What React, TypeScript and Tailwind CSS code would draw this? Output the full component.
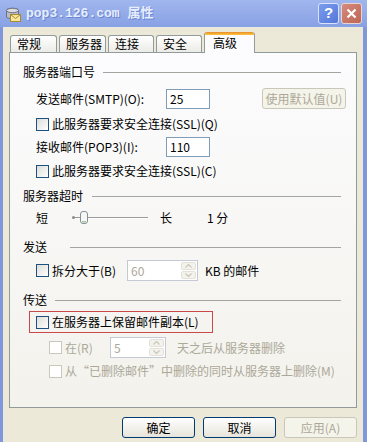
import React from 'react';

const Check = ({ disabled }: { disabled?: boolean }) => (
    <span
        className={
            disabled
                ? 'block w-[13px] h-[13px] shrink-0 border border-[#CAC8BB] bg-white'
                : 'block w-[13px] h-[13px] shrink-0 border border-[#1C5180] bg-linear-to-br from-[#DCDCD7] to-white'
        }
    />
);

const Group = ({ label, w }: { label: string; w: string }) => (
    <div className="flex items-center h-[16px] pl-[13px] pr-[15px]">
        <span className={`${w} shrink-0 leading-[14px]`}>{label}</span>
        <div className="flex-1 h-px bg-[#A5A5A0]" />
    </div>
);

const Spin = ({ value, w }: { value: string; w: string }) => (
    <div className={`${w} h-[21px] border border-[#C3CAD6] bg-white flex items-center justify-between pl-[3px] pr-px`}>
        <span className="text-[#ACA899]">{value}</span>
        <div className="w-[15px] h-[17px] flex flex-col gap-px">
            <div className="flex-1 rounded-[2px] border border-[#E4E2D8] bg-[#F3F2EC] flex items-center justify-center">
                <svg width="7" height="4" viewBox="0 0 7 4"><path d="M0.5 3.5 L3.5 0.5 L6.5 3.5" fill="none" stroke="#C9C7BA" strokeWidth="1.2" /></svg>
            </div>
            <div className="flex-1 rounded-[2px] border border-[#E4E2D8] bg-[#F3F2EC] flex items-center justify-center">
                <svg width="7" height="4" viewBox="0 0 7 4"><path d="M0.5 0.5 L3.5 3.5 L6.5 0.5" fill="none" stroke="#C9C7BA" strokeWidth="1.2" /></svg>
            </div>
        </div>
    </div>
);

const tabs = [
    { label: '常规', w: 'w-[47px]' },
    { label: '服务器', w: 'w-[47px]' },
    { label: '连接', w: 'w-[46px]' },
    { label: '安全', w: 'w-[46px]' },
];

const App: React.FC = () => {
    return (
        <div className="w-[367px] h-[442px] overflow-hidden flex flex-col bg-[#7F98DC] text-[12px] text-black font-['Noto_Sans_CJK_SC',sans-serif]">
            {/* title bar */}
            <div className="h-[27px] shrink-0 flex items-center pl-[5px] pr-[5px] bg-linear-to-b from-[#A0B6EE] to-[#88A1E4]">
                <svg width="17" height="16" viewBox="0 0 17 16" className="shrink-0">
                    <path d="M1.5 4.5 C1.5 1.5 13.5 1.5 13.5 4.5 L13.5 11 C13.5 13 1.5 13 1.5 11 Z" fill="#B9BCC4" stroke="#6E7380" />
                    <ellipse cx="7.5" cy="4.5" rx="6" ry="2.2" fill="#DADCE2" stroke="#6E7380" />
                    <rect x="5.5" y="8.5" width="10" height="7" fill="#FBE69A" stroke="#A98A34" />
                    <path d="M5.5 8.5 L10.5 12.5 L15.5 8.5" fill="none" stroke="#A98A34" />
                </svg>
                <span className="ml-[4px] font-bold text-[13px] text-[#E6EEFC] font-['Liberation_Mono','Noto_Sans_CJK_SC',monospace] [text-shadow:1px_1px_#6A84D4]">
                    pop3.126.com 属性
                </span>
                <div className="ml-auto flex gap-[2px]">
                    <div className="w-[21px] h-[21px] rounded-[3px] border border-[#D8E2F8] bg-linear-to-br from-[#7C9CEC] to-[#5577DA] flex items-center justify-center text-white font-bold text-[15px] font-['Liberation_Sans',sans-serif]">
                        ?
                    </div>
                    <div className="w-[21px] h-[21px] rounded-[3px] border border-[#EAD4D0] bg-linear-to-br from-[#D68A7C] to-[#BD6656] flex items-center justify-center">
                        <svg width="11" height="11" viewBox="0 0 11 11"><path d="M1.5 1.5 L9.5 9.5 M9.5 1.5 L1.5 9.5" stroke="white" strokeWidth="2.2" /></svg>
                    </div>
                </div>
            </div>

            {/* dialog body */}
            <div className="flex-1 ml-[3px] mr-[4px] bg-[#ECE9D8] flex flex-col">
                <div className="mt-[5px] ml-[7px] h-[20px] flex items-end gap-[2px] relative z-10">
                    {tabs.map(t => (
                        <div
                            key={t.label}
                            className={`${t.w} h-[17px] rounded-t-[3px] border border-b-0 border-[#919B9C] bg-linear-to-b from-white to-[#ECEBE6] pl-[6px] leading-[16px]`}
                        >
                            {t.label}
                        </div>
                    ))}
                    <div className="w-[51px] h-[21px] -mb-px rounded-t-[3px] border-x border-[#919B9C] bg-[#FCFCFE] flex flex-col overflow-hidden">
                        <div className="h-[3px] bg-linear-to-b from-[#E68B2C] to-[#FFC73C]" />
                        <span className="pl-[8px] leading-[15px]">高级</span>
                    </div>
                </div>

                {/* tab page */}
                <div className="ml-[6px] w-[348px] h-[356px] border border-[#919B9C] bg-linear-to-b from-[#FCFCFE] to-[#F3F2EC] flex flex-col">
                    <div className="mt-[11px]">
                        <Group label="服务器端口号" w="w-[80px]" />
                    </div>
                    <div className="mt-[8px] h-[21px] flex items-center pl-[26px] pr-[10px]">
                        <span className="w-[130px] leading-[14px]">发送邮件(SMTP)(O):</span>
                        <div className="w-[44px] h-[20px] border border-[#7F9DB9] bg-white pl-[3px] flex items-center">25</div>
                        <div className="ml-auto w-[84px] h-[21px] rounded-[3px] border border-[#C9C7BA] bg-[#F5F4EA] text-[#ACA899] flex items-center justify-center">
                            使用默认值(U)
                        </div>
                    </div>
                    <div className="mt-[7px] h-[16px] flex items-center gap-[3px] pl-[26px]">
                        <Check />
                        <span className="leading-[14px]">此服务器要求安全连接(SSL)(Q)</span>
                    </div>
                    <div className="mt-[4px] h-[21px] flex items-center pl-[26px]">
                        <span className="w-[130px] leading-[14px]">接收邮件(POP3)(I):</span>
                        <div className="w-[44px] h-[20px] border border-[#7F9DB9] bg-white pl-[3px] flex items-center">110</div>
                    </div>
                    <div className="mt-[6px] h-[16px] flex items-center gap-[3px] pl-[26px]">
                        <Check />
                        <span className="leading-[14px]">此服务器要求安全连接(SSL)(C)</span>
                    </div>

                    <div className="mt-[9px]">
                        <Group label="服务器超时" w="w-[69px]" />
                    </div>
                    <div className="mt-[5px] h-[18px] flex items-center pl-[26px]">
                        <span className="w-[36px] leading-[14px]">短</span>
                        <svg width="76" height="18" viewBox="0 0 76 18" className="shrink-0">
                            <rect x="0" y="8" width="76" height="1" fill="#9A9A9A" />
                            <rect x="0" y="9" width="76" height="1" fill="#FFFFFF" />
                            <circle cx="1.5" cy="8.5" r="1.5" fill="#8A8A8A" />
                            <rect x="8.5" y="2.5" width="7" height="12" rx="2.5" fill="#F7F7F3" stroke="#84909C" />
                            <rect x="10" y="12" width="4" height="1.5" fill="#A8C89A" />
                        </svg>
                        <span className="ml-[12px] leading-[14px]">长</span>
                        <span className="ml-[35px] leading-[14px]">1 分</span>
                    </div>

                    <div className="mt-[12px]">
                        <Group label="发送" w="w-[47px]" />
                    </div>
                    <div className="mt-[5px] h-[21px] flex items-center pl-[26px]">
                        <Check />
                        <span className="ml-[3px] w-[75px] leading-[14px]">拆分大于(B)</span>
                        <Spin value="60" w="w-[71px]" />
                        <span className="ml-[7px] leading-[14px]">KB 的邮件</span>
                    </div>

                    <div className="mt-[11px]">
                        <Group label="传送" w="w-[32px]" />
                    </div>
                    <div className="mt-[3px] ml-[19px] w-[184px] h-[22px] border border-[#C94848] flex items-center gap-[3px] pl-[6px]">
                        <Check />
                        <span className="leading-[14px]">在服务器上保留邮件副本(L)</span>
                    </div>
                    <div className="mt-[4px] h-[21px] flex items-center pl-[39px] text-[#ACA899]">
                        <Check disabled />
                        <span className="ml-[3px] w-[45px] leading-[14px]">在(R)</span>
                        <Spin value="5" w="w-[56px]" />
                        <span className="ml-[11px] leading-[14px]">天之后从服务器删除</span>
                    </div>
                    <div className="mt-[5px] h-[16px] flex items-center gap-[3px] pl-[39px] text-[#ACA899]">
                        <Check disabled />
                        <span className="leading-[14px]">从“已删除邮件”中删除的同时从服务器上删除(M)</span>
                    </div>
                </div>

                {/* buttons */}
                <div className="mt-[9px] flex justify-end gap-[8px] pr-[6px]">
                    <div className="w-[73px] h-[21px] rounded-[3px] border border-[#003C74] bg-linear-to-b from-white to-[#E6E4DA] flex items-center justify-center">确定</div>
                    <div className="w-[73px] h-[21px] rounded-[3px] border border-[#003C74] bg-linear-to-b from-white to-[#E6E4DA] flex items-center justify-center">取消</div>
                    <div className="w-[73px] h-[21px] rounded-[3px] border border-[#C9C7BA] bg-[#F5F4EA] text-[#ACA899] flex items-center justify-center">应用(A)</div>
                </div>
            </div>
        </div>
    );
};

export default App;
